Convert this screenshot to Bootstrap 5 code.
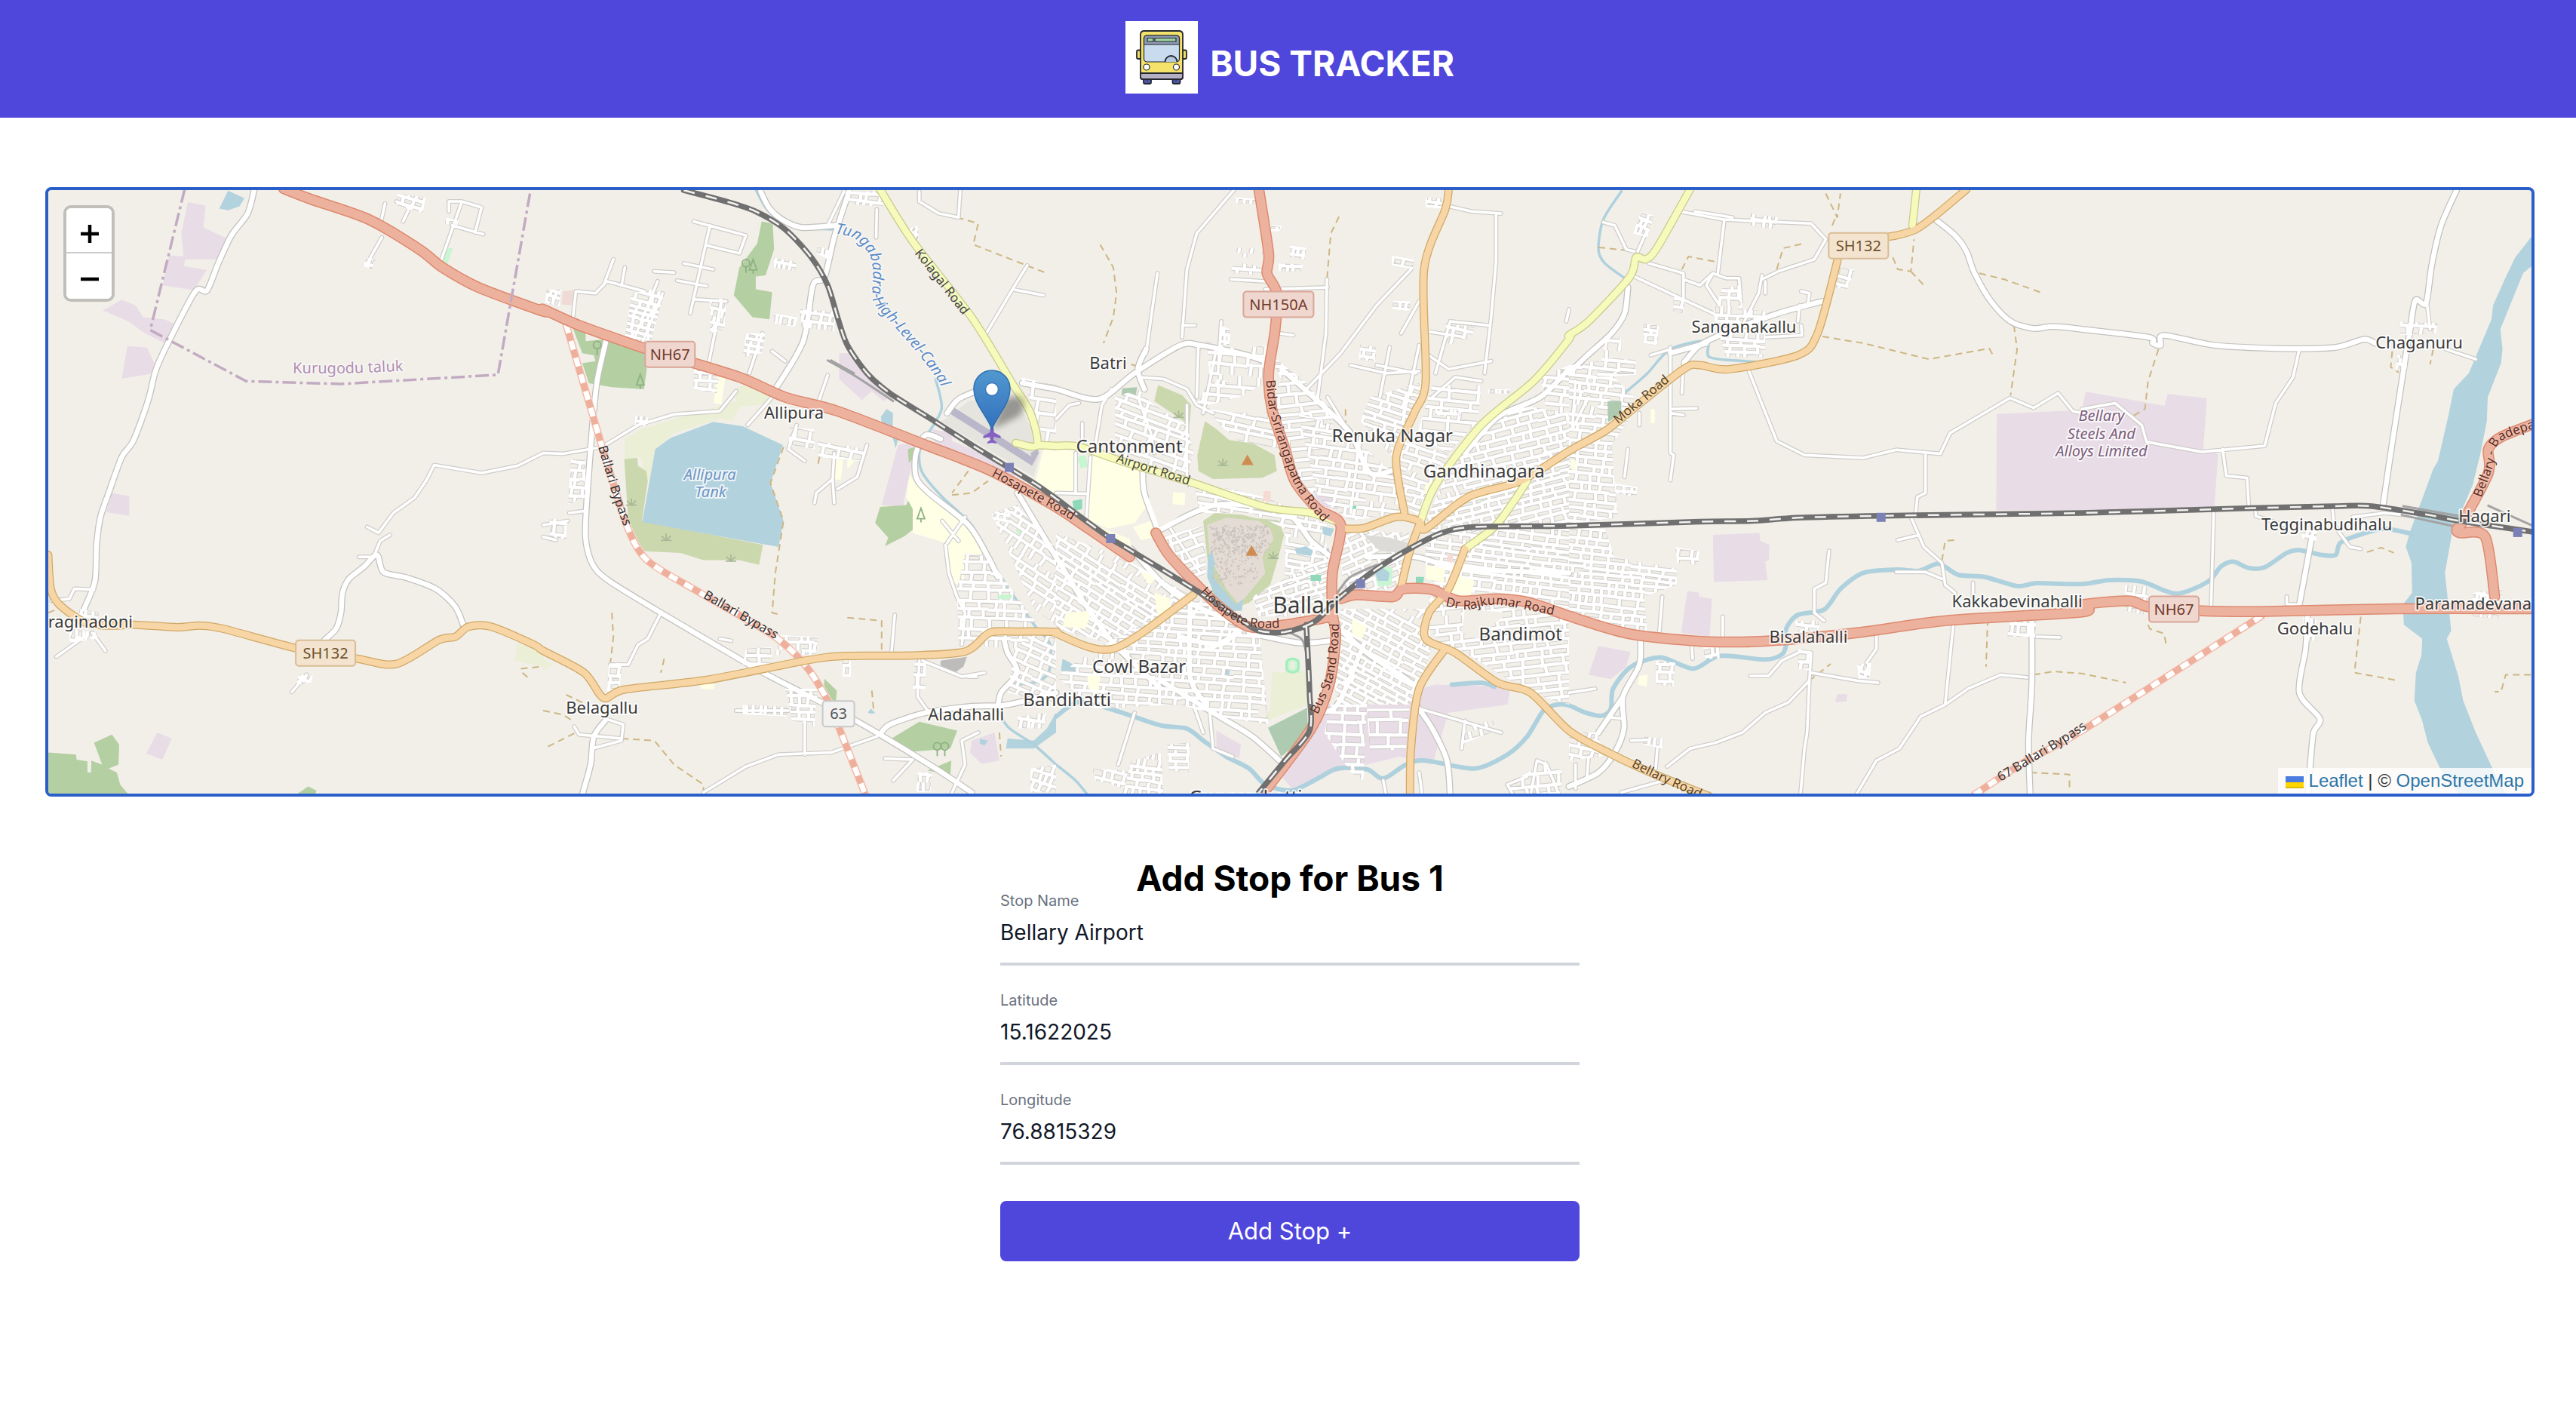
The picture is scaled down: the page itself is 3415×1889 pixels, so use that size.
<!DOCTYPE html>
<html lang="en">
<head>
<meta charset="utf-8">
<meta name="viewport" content="width=device-width, initial-scale=1">
<title>Bus Tracker</title>
<link href="https://cdn.jsdelivr.net/npm/bootstrap@5.3.0/dist/css/bootstrap.min.css" rel="stylesheet">
<style>
  :root { --brand: #4f46dc; }
  body { font-family: Inter, "Liberation Sans", sans-serif; background: #fff; color: #000; }
  .site-header { background: var(--brand); padding: 28px 0 32px 5px; gap: 16px; }
  .site-logo { width: 96px; height: 96px; }
  .site-title { font-size: 46px; line-height: 64px; font-weight: 700; padding-top: 16px; }
  .page-body { padding: 92px 55px 0 60px; }
  .map-frame { border: 4px solid #2a5fc9; border-radius: 8px; height: 808px; background: #f2efe9; }
  .map-canvas { width: 100%; height: 100%; }
  .zoom-control { top: 20px; left: 20px; border: 4px solid rgba(0,0,0,.2); border-radius: 10px; background-clip: padding-box; }
  .zoom-control button { width: 60px; height: 60px; border: 0; background: #fff; padding: 0; border-radius: 0 0 6px 6px; }
  .zoom-control button:first-child { border-bottom: 2px solid #ccc; border-radius: 6px 6px 0 0; }
  .map-credit { right: 0; bottom: 0; padding: 0 10px; font: 24px/34px "Liberation Sans", sans-serif; color: #333; background: rgba(255,255,255,.8); }
  .map-credit a { color: #2e76a8; text-decoration: none; }
  .map-credit svg { width: 24px; height: 16px; }
  .stop-form { width: 768px; margin-top: 92px; }
  .stop-title { font-size: 46px; line-height: 32px; font-weight: 700; margin: 0; }
  .stop-field { margin-bottom: 32px; }
  .stop-field label { font-size: 20px; line-height: 28px; color: #6b7280; display: block; }
  .stop-field input { font-size: 28px; line-height: 40px; padding: 8px 0 20px; border: 0; border-bottom: 4px solid #d1d5db; border-radius: 0; color: #111827; background: transparent; height: 72px; }
  .stop-button { background: var(--brand); color: #fff; border-radius: 8px; height: 80px; font-size: 31px; margin-top: 16px; border: 0; }
  .place { font-family: "Noto Sans", sans-serif; fill: #3c3c3c; stroke: #fff; stroke-opacity: .75; stroke-width: 4px; paint-order: stroke; stroke-linejoin: round; text-anchor: middle; }
</style>
<script src="https://cdn.jsdelivr.net/npm/bootstrap@5.3.0/dist/js/bootstrap.bundle.min.js"></script>
</head>
<body>
<header class="site-header d-flex justify-content-center align-items-center">
  <svg class="site-logo" viewBox="0 0 96 96" aria-hidden="true">
    <rect width="96" height="96" fill="#fff"/>
    <g stroke="#25272f" stroke-width="1.8" stroke-linejoin="round">
      <rect x="15" y="38.500" width="6" height="11.500" rx="2" fill="#f0dc62"/>
      <rect x="75" y="38.500" width="6" height="11.500" rx="2" fill="#f0dc62"/>
      <rect x="24" y="75" width="10" height="8" rx="2" fill="#4c58a8"/>
      <rect x="62.500" y="75" width="10" height="8" rx="2" fill="#4c58a8"/>
      <path d="M20 74V18q0-5 5-5h46q5 0 5 5v56q0 3-3 3H23q-3 0-3-3z" fill="#f4e26b"/>
      <path d="M20 69h56v5q0 3-3 3H23q-3 0-3-3z" fill="#b4afc2"/>
      <rect x="24.500" y="19" width="47" height="35" rx="4" fill="#c9dcef" stroke-width="1.200"/>
      <path d="M24.500 31v-8q0-4 4-4h39q4 0 4 4v8z" fill="#8e9bb1" stroke-width="1.200"/>
      <rect x="29" y="22.500" width="8" height="4.500" fill="#9fd2a0" stroke-width="1.200"/>
      <rect x="39" y="22.500" width="28" height="4.500" fill="#9fd2a0" stroke-width="1.200"/>
      <path d="M52.500 54a8 8 0 0 1 16 0" fill="#b4c8e0"/>
      <circle cx="28" cy="61" r="4" fill="#fff" stroke-width="1.200"/>
      <circle cx="67.500" cy="61" r="4" fill="#fff" stroke-width="1.200"/>
      <path d="M29 77v3M67 77v3" stroke-width="1"/>
    </g>
  </svg>
  <h1 class="site-title text-white mb-0">BUS TRACKER</h1>
</header>

<main class="page-body">
  <section class="map-frame position-relative overflow-hidden" aria-label="Map">
    <svg class="map-canvas d-block" id="map" viewBox="64 252 3292 800" preserveAspectRatio="xMidYMid slice" fill="none"></svg>
    <div class="zoom-control position-absolute d-flex flex-column">
      <button type="button" aria-label="Zoom in"><svg width="60" height="56" viewBox="0 0 60 56"><path d="M19 33h24M31 21v24" stroke="#000" stroke-width="4.500"/></svg></button>
      <button type="button" aria-label="Zoom out"><svg width="60" height="60" viewBox="0 0 60 60"><path d="M19 34h24" stroke="#000" stroke-width="4.500"/></svg></button>
    </div>
    <div class="map-credit position-absolute">
      <a href="#"><svg viewBox="0 0 12 8" aria-hidden="true"><path fill="#4c7be1" d="M0 0h12v4H0z"/><path fill="#ffd500" d="M0 4h12v3H0z"/><path fill="#e0bc00" d="M0 7h12v1H0z"/></svg> Leaflet</a> | © <a href="#">OpenStreetMap</a>
    </div>
  </section>

  <form class="stop-form mx-auto">
    <h2 class="stop-title text-center">Add Stop for Bus 1</h2>
    <div class="stop-field"><label for="stopName">Stop Name</label><input class="w-100 d-block" id="stopName" type="text" value="Bellary Airport"></div>
    <div class="stop-field"><label for="lat">Latitude</label><input class="w-100 d-block" id="lat" type="text" value="15.1622025"></div>
    <div class="stop-field"><label for="lng">Longitude</label><input class="w-100 d-block" id="lng" type="text" value="76.8815329"></div>
    <button type="button" class="stop-button btn w-100">Add Stop +</button>
  </form>
</main>

<script>
// The map is split in five sheets; every sheet has its own origin and grid scale.
const SHEETS = { A: [40, 2.306], B: [720, 2.306], C: [1400, 2.306], D: [2080, 2.306], E: [2760, 2.394] };
const pt = (s, x, y) => [SHEETS[s][0] + x / SHEETS[s][1], 230 + y / 1.889];
const parse = str => {
  let s = 'A', out = [], n = [];
  for (const t of str.trim().split(/\s+/)) {
    if (SHEETS[t]) { s = t; continue; }
    n.push(+t);
    if (n.length < 2) continue;
    const q = pt(s, n[0], n[1]), last = out[out.length - 1];
    n = [];
    // sheets share their edge, so a line that crosses it lists the edge point twice
    if (!last || Math.hypot(q[0] - last[0], q[1] - last[1]) > 2) out.push(q);
  }
  return out;
};
const r1 = v => Math.round(v * 10) / 10;
const straight = p => 'M' + p.map(q => r1(q[0]) + ' ' + r1(q[1])).join('L');
const curve = p => {
  if (p.length < 3) return straight(p);
  let d = 'M' + r1(p[0][0]) + ' ' + r1(p[0][1]);
  for (let i = 0; i < p.length - 1; i++) {
    const a = p[i - 1] || p[i], b = p[i], c = p[i + 1], e = p[i + 2] || c;
    d += 'C' + [b[0] + (c[0] - a[0]) / 7, b[1] + (c[1] - a[1]) / 7, c[0] - (e[0] - b[0]) / 7, c[1] - (e[1] - b[1]) / 7, c[0], c[1]].map(r1).join(' ');
  }
  return d;
};
let seed = 11;
const rnd = () => (seed = (seed * 16807) % 2147483647) / 2147483647;

const AREAS = [
  ['#e8dce6', ['A 482 72 536 80 530 135 600 162 570 215 470 215 462 150','A 425 205 475 208 470 232 540 242 500 292 405 280','A 222 343 280 316 322 330 345 360 410 365 450 380 430 432 350 400 300 370','A 297 432 357 436 382 480 380 500 280 514','A 250 800 303 808 303 857 232 848','A 388 1400 433 1415 404 1468 355 1452',
    'B 905 450 945 450 990 500 1060 560 1040 570 1005 545 975 567 905 515','B 1085 680 1130 675 1135 700 1110 790 1100 835 1035 830','B 1190 640 1250 650 1250 670 1400 720 1460 745 1440 760 1200 690','B 1310 1420 1380 1400 1395 1470 1340 1478 1305 1450',
    'C 790 797 860 820 862 842 800 830','C 490 1395 565 1430 560 1465 490 1440','C 800 1330 1080 1330 1110 1290 1160 1280 1390 1285 1380 1330 1200 1350 1150 1480 1050 1460 850 1500 720 1540 680 1500','C 860 1040 960 980 975 1010 930 1045','C 1490 700 1550 690 1540 715 1490 730',
    'D 440 905 582 900 585 920 613 930 611 968 600 972 607 1018 443 1023','D 362 1045 397 1050 397 1060 437 1065 430 1160 343 1150','D 90 1183 188 1198 175 1235 128 1266 60 1255','D 820 1304 851 1304 848 1322 814 1324','D 1308 602 1568 592 E 0 590 12 546 262 582 272 552 397 563 385 690 432 703 420 840 0 843 D 1568 845 1306 843']],
  ['#b4cfa2', ['A 55 1450 140 1455 142 1468 175 1472 175 1500 186 1500 187 1470 220 1480 195 1425 250 1405 272 1430 270 1480 240 1490 265 1500 275 1530 305 1560 55 1560','A 805 1560 850 1535 875 1545 870 1560',
    'B 668 120 702 125 706 190 680 255 650 258 650 290 700 297 692 365 640 360 583 305 600 235 655 175','B 90 385 130 400 130 420 190 415 308 445 317 490 308 540 210 535 140 525 120 475 160 470 155 455 120 450','B 1030 835 1110 830 1120 812 1200 832 1195 845 1175 850 1175 882 1140 885 1105 908 1045 933 1055 912 1015 875','B 1115 690 1140 685 1135 710 1118 725','B 860 1265 898 1295 895 1325 858 1300','B 1065 1415 1150 1373 1266 1395 1245 1440 1130 1448','B 1175 1495 1248 1470 1245 1505']],
  ['#aecab0', ['C 203 538 248 535 243 558 200 556','C 648 1388 768 1338 770 1405 688 1460','D 118 570 160 570 160 600 120 622']],
  ['#ebefd5', ['B 250 665 300 640 590 570 590 540 610 530 710 550 700 575 600 585 580 620 540 615 400 650 345 690 330 770 310 760 300 710 250 715','A 1490 1175 1568 1200 1568 1235 1480 1220','C 660 1250 765 1245 770 1330 660 1365 620 1385 655 1340','B 0 1215 30 1230 0 1245']],
  ['#cbd8ae', ['B 248 715 288 712 290 732 315 745 320 770 302 870 672 930 660 980 600 968 490 968 420 950 290 945 262 890','C 312 530 385 555 413 580 408 630 300 570','C 455 620 490 640 530 668 600 675 668 705 675 745 630 762 480 765 435 745 432 705','C 450 870 485 850 570 855 610 863 680 868 697 905 680 960 655 1030 590 1075 540 1090 480 1060 462 960']],
  ['#e4dcd4', ['C 462 880 520 862 620 870 655 890 665 915 630 960 640 1000 610 1030 560 1080 520 1040 470 960']],
  ['#b2d2dd', ['A 605 43 655 62 640 82 605 92 578 88','B 343 690 390 662 520 622 610 633 733 680 695 775 735 870 720 935 303 873','B 1032 610 1050 590 1070 600 1068 640 1040 640','B 1068 660 1085 665 1078 688','B 1335 1416 1360 1420 1350 1432 1335 1428','B 1420 1415 1500 1420 1540 1390 1568 1350 1568 1400 1500 1440 1415 1440','B 992 1350 1002 1340 1015 1350 1005 1353',
    'C 465 955 478 948 485 975 480 1010 520 1050 550 1080 572 1065 568 1095 540 1095 490 1065 462 1010','C 730 940 765 933 785 945 780 958 735 952','C 815 885 850 890 840 908 815 903','C 820 935 835 940 832 975 812 965','C 905 975 912 958 922 975','C 510 1235 532 1238 528 1258 508 1252','C 20 1215 65 1235 55 1255 15 1245',
    'E 1430 155 1375 210 1345 260 1305 330 1300 365 1228 500 1180 540 1165 600 1130 720 1115 740 1040 900 1028 935 1046 975 1048 1050 1018 1080 1022 1130 1080 1165 1078 1205 1060 1250 1055 1320 1080 1370 1098 1425 1140 1495 1200 1560 1350 1560 1300 1485 1250 1400 1210 1320 1195 1260 1158 1165 1172 1145 1152 1000 1175 900 1240 780 1265 700 1285 620 1288 560 1330 475 1335 440 1328 390 1400 250 1430 230']],
  ['#ffffe5', ['B 530 510 557 512 545 578 522 575','B 893 705 918 710 910 768 890 765','B 930 708 960 715 930 740','B 1120 755 1145 780 1200 820 1300 880 1345 950 1290 960 1285 1033 1255 1025 1230 925 1130 900 1130 840 1110 810','B 480 1275 525 1280 520 1292 482 1290','B 1530 690 1568 695 1568 810 1505 770',
    'C 0 690 60 695 60 800 0 805','C 100 705 160 705 265 745 280 830 240 875 160 890 92 865']],
  ['#e5e4de', ['B 1240 610 1300 570 1370 560 1450 570 1500 650 1520 700 1500 760 1420 720 1215 620']],
  ['#b9b7c9', ['B 1255 585 1505 715 1495 732 1245 602','B 1490 700 1512 690 1515 700 1500 725']],
  ['#bdbcbb', ['B 1215 1220 1296 1210 1285 1235 1250 1255 1215 1240']],
  ['#f0dad5', ['B 60 295 93 292 88 330 56 328']],
  ['#c8f5d2', ['C 65 710 90 705 98 735 75 738','B 1445 890 1465 885 1465 898 1450 905','A 1275 185 1292 188 1275 228 1260 222']]
];

// parks, grounds and ponds inside the built-up districts
const INSETS = [
  ['#f2efe9', ['C 300 745 400 780 390 850 320 890 280 830','C 1250 1090 1380 1100 1290 1165 1240 1150']],
  ['#ffffe5', ['C 235 885 290 870 300 910 260 918','C 358 798 395 800 393 830 356 828','C 120 880 225 915 230 935 180 925','C 255 995 310 1010 285 1030','C 300 1050 350 1065 345 1100 310 1105','C 30 1100 110 1095 90 1140 20 1135','C 1130 980 1190 990 1185 1025 1130 1015','C 1210 1000 1280 1020 1265 1062 1200 1050','C 905 1115 950 1135 935 1165 905 1155','C 95 1255 135 1260 130 1295 100 1290','C 1130 775 1150 772 1145 795 1125 798','D 215 1258 240 1255 238 1285 210 1280','D 250 590 262 590 262 625 250 625','D 5 715 25 720 20 745 5 740']],
  ['#dcdbd8', ['C 940 905 1020 912 1075 925 1070 950 990 945']],
  ['#c8f5d2', ['C 702 1215 745 1215 745 1250 702 1250','C 970 990 1000 980 1030 990 1025 1030 985 1035','B 1390 1055 1435 1055 1430 1066 1392 1066']],
  ['#b2d2dd', ['C 975 1000 1000 988 1020 1000 1015 1020 985 1020','C 730 940 765 933 785 945 780 958 735 952','C 815 885 850 890 840 908 815 903']],
  ['#8fd9ba', ['C 50 820 80 815 80 840 55 845','C 778 1005 810 1005 810 1020 778 1020','C 1100 1010 1125 1010 1122 1030 1100 1030','C 898 832 918 832 918 840 898 840']],
  ['#f5dbd3', ['C 635 795 656 795 656 822 632 820','C 1197 950 1215 955 1210 975 1195 972']],
  ['#aecab0', ['D 118 570 160 570 160 600 120 622']]
];

// district outline, street angle, block size
const TOWNS = [
  ['C 180 560 250 540 300 580 400 630 420 700 400 760 300 740 180 700', 20, 13, 30],
  ['C 460 420 560 440 645 430 650 520 560 560 420 590 470 520', 5, 15, 26],
  ['C 470 590 560 600 650 600 690 690 560 670 500 630', 12, 12, 30],
  ['C 700 500 760 520 850 600 830 700 790 800 760 800 720 690 660 560', -6, 14, 34],
  ['C 740 600 880 640 1030 750 1060 850 900 870 800 810', 8, 13, 26],
  ['C 930 620 960 560 1130 520 1110 600 1060 670 1200 700 1120 860 1050 830 1040 720', 18, 10, 24],
  ['C 1150 530 1300 530 1290 620 1200 700 1100 660', 6, 14, 30],
  ['C 1320 640 1420 580 1568 600 1568 880 1350 880 1280 900 1130 870 1200 740', -14, 10, 22],
  ['C 1130 880 1568 890 1568 1090 1360 1050 1180 1050 1130 1000', 7, 10, 22],
  ['C 1140 1060 1568 1110 1568 1330 1450 1300 1250 1200 1180 1180 1140 1140', -6, 12, 26],
  ['C 870 1090 1130 1090 1150 1180 1110 1290 1080 1330 860 1330 840 1200', 28, 10, 22],
  ['C 860 890 1080 900 1060 1040 880 1050', -24, 12, 22],
  ['C 420 770 640 810 830 880 820 1060 700 1060 700 890 600 850 440 850', 10, 12, 28],
  ['C 600 1060 840 950 830 1050 770 1110 620 1110', -18, 10, 18],
  ['C 330 910 450 880 460 1000 420 1020 370 960', -20, 13, 26],
  ['C 0 900 200 960 420 1060 260 1150 180 1180 0 1140', 32, 10, 22],
  ['C 100 1200 420 1060 620 1140 650 1380 500 1360 380 1330 120 1340 0 1260', 4, 11, 22],
  ['C 840 1330 950 1330 940 1520 900 1500 820 1400', 2, 13, 24],
  ['C 950 1340 1080 1340 1070 1440 960 1450', 0, 16, 26],
  ['B 1370 850 1450 830 1568 940 1568 1130 1500 1090', 34, 12, 20],
  ['B 1290 950 1360 960 1450 1060 1520 1140 1460 1190 1270 1180 1265 1040', 2, 13, 22],
  ['B 1500 1150 1568 1150 1568 1330 1420 1300 1440 1190', 24, 12, 22],
  ['C 230 1470 320 1450 330 1560 200 1560', 8, 11, 16],
  ['C 340 1430 410 1425 405 1500 345 1495', 2, 10, 20],
  ['D 0 480 90 470 200 560 180 620 130 680 150 860 0 880', 6, 11, 22],
  ['D 0 890 110 890 140 960 330 990 330 1030 230 1060 240 1150 120 1150 0 1100', 6, 11, 20],
  ['D 115 410 160 410 160 465 205 465 205 505 85 510', 4, 12, 20],
  ['D 470 285 525 280 530 340 600 345 600 460 480 460 440 350', 3, 11, 18],
  ['D 325 935 400 945 395 980 330 975', 4, 12, 16],['D 140 775 210 785 205 810 140 800', 6, 13, 14],
  ['D 195 150 220 95 260 105 240 160', 20, 10, 14],['D 555 100 640 110 630 140 555 130', 6, 14, 12],
  ['D 265 1220 325 1225 320 1285 265 1280', 2, 12, 14],['D 0 1400 90 1400 100 1460 0 1470', 12, 12, 16],
  ['D 820 235 875 240 850 290 815 285', 16, 12, 14],['D 228 375 275 380 270 430 228 425', 5, 9, 12],['D 320 310 355 310 350 350 318 345', 8, 10, 14],
  ['D 230 1410 290 1415 285 1440 225 1430', 8, 12, 10],['D 410 1185 460 1180 460 1215 415 1215', -10, 10, 12],['D 690 1120 770 1120 760 1150 700 1150', 4, 10, 14],['D 880 1230 925 1225 920 1265 885 1265', 20, 8, 8],['D 700 1190 740 1195 740 1245 700 1240', 4, 12, 14],['D 1350 1110 1430 1110 1425 1160 1340 1160', 4, 12, 16],
  ['B 270 300 330 290 370 300 330 420 250 410', 14, 10, 18],['B 510 320 560 310 555 390 510 400', 14, 11, 16],['B 460 480 540 500 530 550 460 540', 4, 12, 16],['B 620 400 680 400 670 450 610 460', 10, 11, 16],['B 785 340 895 345 890 395 790 385', 8, 11, 14],['B 705 210 775 220 770 245 705 235', 12, 14, 10],['B 840 180 880 195 870 215 835 200', 14, 11, 12],['B 705 350 780 360 770 385 705 375', 12, 14, 10],['B 925 45 1040 45 1040 85 925 75', 6, 12, 18],['B 1110 140 1145 130 1150 175 1130 180', 20, 9, 12],
  ['B 85 715 130 715 130 810 75 830', 4, 10, 16],['B 20 865 75 865 70 915 20 910', 8, 14, 18],['B 620 1190 700 1185 700 1240 610 1230', 2, 12, 16],['B 720 1155 840 1160 835 1205 710 1205', 2, 12, 16],['B 740 1290 840 1290 830 1385 760 1370', 2, 12, 16],['B 610 1330 745 1335 745 1360 610 1355', 3, 20, 12],['B 200 1230 240 1225 235 1300 195 1300', 2, 12, 12],['B 755 635 830 640 830 690 750 680', 10, 14, 18],['B 840 670 990 690 970 720 840 710', 10, 14, 20],['B 10 290 55 290 50 335 5 325', 20, 9, 9],['B 280 605 320 610 320 632 280 630', 5, 11, 12],['B 1450 1360 1540 1350 1530 1390 1450 1390', 8, 12, 14],['B 1490 1490 1568 1480 1568 1550 1490 1550', 20, 11, 12],['B 1145 1500 1190 1500 1185 1550 1140 1550', 5, 12, 12],['B 1135 1220 1170 1220 1170 1290 1130 1290', 3, 14, 24],['B 1460 510 1568 530 1568 690 1540 690 1500 590', 8, 20, 34],['B 915 1220 942 1220 942 1260 915 1260', 2, 12, 10],['B 1370 850 1430 850 1425 875 1375 868', 14, 12, 10],
  ['A 1120 50 1210 60 1200 100 1120 80', 14, 10, 13],['A 1030 210 1055 215 1045 240 1015 232', 20, 9, 8],['A 1270 110 1310 118 1305 130 1268 126', 8, 10, 10],['A 120 1140 205 1150 205 1165 120 1175', 8, 8, 8],['A 820 1255 865 1258 860 1275 815 1280', 30, 8, 8],['A 150 1090 215 1100 205 1115 150 1110', 8, 8, 10],
  ['C 545 185 635 188 630 212 540 208', 4, 9, 24],['C 540 220 640 235 630 255 535 250', 4, 9, 24],['C 545 60 612 62 612 76 550 74', 3, 9, 16],['C 650 130 690 130 685 145 650 145', 4, 10, 12],['C 715 180 765 185 760 215 715 210', 6, 11, 12],['C 680 225 755 228 750 245 680 245', 4, 10, 12],['C 1130 60 1180 62 1178 88 1130 85', 8, 9, 12],['C 1025 205 1095 215 1090 240 1025 230', 12, 10, 14],['C 1030 318 1085 320 1080 345 1028 340', 6, 11, 12],['C 930 428 980 435 975 472 925 465', 10, 9, 12],['C 490 515 530 520 525 535 485 530', 10, 10, 10],['C 1190 375 1280 385 1270 410 1200 430', 14, 14, 18],['C 1160 590 1235 590 1235 608 1160 605', 2, 12, 12],['C 1320 540 1390 540 1385 552 1320 550', 2, 12, 12],['C 1480 510 1568 480 1568 600 1500 600', 6, 13, 30],['C 110 1490 220 1495 210 1540 120 1520', 14, 12, 14],['C 1250 1380 1340 1370 1330 1400 1240 1430', -14, 13, 20],['C 1380 1530 1500 1470 1550 1500 1540 1555 1400 1555', -6, 15, 22],['C 500 380 535 390 530 430 500 430', 8, 10, 12],['C 650 450 760 520 690 520', 4, 12, 20],
  ['E 1010 370 1130 375 1125 400 1010 405', 4, 12, 16],['E 135 1030 215 1035 200 1105 140 1095', 8, 20, 20],['E 690 890 745 895 745 920 700 915', 14, 10, 10],['E 1240 1050 1335 1040 1325 1115 1240 1110', 10, 12, 12],['E 700 1110 745 1115 740 1170 705 1170', 5, 14, 14],['E 1000 455 1035 455 1030 490 995 490', 8, 10, 14]
];

const LINES = {
  stream: ['B 650 40 680 85 720 115 780 135 890 140','B 1200 515 1218 590 1170 660 1150 700 1160 750 1220 810 1310 880 1370 970 1440 1060 1510 1140','B 1510 1140 1550 1180 1545 1250 1500 1275 1420 1285 1390 1330 1420 1385 1500 1430 1568 1480','C 0 1480 60 1520 100 1560','C 60 560 120 565 160 550','D 160 45 105 115 90 190 110 225 170 262','D 170 550 240 500 310 440 420 420 430 460 540 470 640 475'],
  river: ['C 0 1360 60 1325 120 1330 220 1355 320 1382 400 1390 450 1420 520 1460 590 1490 640 1530 720 1545 800 1515 860 1490 950 1492 1000 1515 1070 1480 1130 1470 1280 1490 1380 1455 1440 1410 1490 1345 1530 1330 1568 1332 D 0 1332 50 1350 100 1358 128 1340 135 1290 190 1235 280 1212 380 1240 460 1208 600 1217 650 1205 664 1180 664 1140 700 1105 780 1092 830 1040 900 1000 1000 992 1070 995 1130 977 1190 1005 1270 1010 1370 1033 1430 1026 1568 1028 E 0 1026 90 1018 190 1022 300 1052 400 1022 440 985 480 972 530 988 580 986 650 950 690 943 760 955 805 955 820 925 880 905 960 890 1045 902','C 1210 1280 1300 1275 1340 1285'],
  track: ['A 1568 700 1490 732 1380 750 1235 730 1210 770 1175 812 1110 850 1065 900 1030 885','A 1050 960 1070 920 1100 905','A 1050 960 1005 960','A 1085 75 1070 130','A 1075 160 1030 225','A 1120 70 1160 85 1140 120','A 1255 220 1320 70 1280 70 1280 95','A 1320 70 1380 85 1360 148','A 1290 130 1385 152','A 65 1070 120 1065 135 1040 195 1042','A 165 1160 80 1210','A 190 1150 230 1195','A 845 1255 800 1298',
    'B 0 700 60 702 180 685 290 630 400 603 540 595 590 545','B 90 370 100 295 160 300 195 270 310 295','B 215 215 185 280','B 250 235 240 280','B 340 245 400 248','B 460 120 620 155 600 200 500 180','B 510 130 450 350','B 430 225 520 240','B 410 268 500 282','B 460 315 560 320','B 350 270 275 420','B 365 300 300 430','B 545 320 505 480','B 670 400 630 500','B 700 445 740 470','B 625 630 700 560','B 870 505 830 600','B 775 630 750 690 800 720','B 890 700 885 765 835 800 830 825','B 885 765 890 825','B 990 680 960 760 900 790','B 1480 230 1435 290 1355 400','B 1435 290 1530 305','B 920 45 870 130','B 1150 45 1150 70 1210 100 1270 110 1275 45','B 1020 90 1018 160','B 0 880 75 870','B 0 910 40 918','B 80 850 130 845','B 360 1100 320 1165 290 1180 260 1230 205 1230','B 490 1550 620 1485 720 1455 880 1450 1020 1410','B 800 1380 800 1455','B 590 1345 750 1345','B 95 1385 110 1405 240 1415 245 1380 190 1365','B 150 1440 240 1420','B 1075 1105 1065 1200','B 1045 1465 1130 1468 1070 1520','B 540 1165 575 1170','B 1150 1220 1145 1310 1180 1350','B 1160 1220 1280 1260 1350 1250','B 1300 1260 1325 1260','B 1230 930 1240 1000 1265 1060 1290 1100 1280 1180','B 1235 925 1290 860','B 1270 920 1220 870','B 1250 1550 1290 1480 1280 1420 1330 1400',
    'C 545 40 430 150 400 240 385 410','C 310 250 275 450','C 385 380 425 380','C 505 370 495 500','C 435 435 430 560','C 490 440 450 600','C 640 290 830 285','C 828 265 825 400 800 560','C 535 265 640 270','C 680 400 725 405','C 1085 240 980 330 870 450 760 545','C 1110 320 1055 400','C 1020 435 990 560','C 1110 430 1060 620','C 1190 80 1270 95 1360 100','C 1345 105 1345 220 1330 360 1310 500','C 1205 370 1320 380','C 1205 370 1160 500','C 1130 395 1250 410','C 1150 560 1220 510 1300 520','C 170 540 140 580 120 680','C 0 615 40 580 70 575','C 255 510 330 515 400 540 430 580 480 600','C 80 625 80 680','C 250 560 290 650 300 700','C 540 1460 480 1440 470 1350','C 420 1330 450 1400','C 240 1350 190 1480','C 1560 370 1568 340','C 830 560 890 640','C 400 580 400 780','C 930 660 900 850','C 980 480 1100 500','C 1490 700 1540 690','C 1000 1520 1010 1560','C 1110 1500 1120 1560','C 1450 1560 1470 1470 1500 1480 1540 1560','C 1400 1560 1380 1530 1440 1510','C 1110 1340 1360 1400','C 1250 1370 1240 1440','C 900 480 1010 500 1110 495','C 1130 450 1200 490 1330 470','C 60 700 60 800','C 105 710 92 870','C 0 800 90 802','C 350 890 440 1000',
    'D 340 95 470 115 640 122 740 125 785 165 750 215 640 245 590 265','D 385 95 500 110','D 475 115 455 250','D 105 122 140 130 175 190 200 195','D 210 195 240 140','D 245 225 350 250 350 310','D 200 258 270 285 440 350','D 350 265 400 280 440 250 480 262 520 262 525 320','D 440 250 420 280 460 330','D 590 255 580 300 530 380','D 600 270 600 300','D 705 330 700 370','D 710 380 712 405 600 410','D 710 295 735 300 730 330','D 550 495 635 670 720 705 900 712 1000 692 1135 702 1165 650 1348 562 1420 587 1495 550 1540 595 1568 600 E 0 590 105 575 190 630 205 672 380 697 580 682 615 575 670 510 690 440','D 1090 705 1090 800 1065 810 1060 850 1045 860 1085 935 1140 975 1150 1030 1180 1050','D 1005 918 1070 905','D 1000 998 1090 998 1140 1015','D 310 435 310 700 320 705 310 768','D 250 455 310 440','D 310 590 390 588','D 310 600 350 605','D 350 470 345 550','D 795 945 785 1025 750 1040 750 1100 780 1120','D 555 1258 610 1258 650 1220 700 1200','D 740 1200 735 1270 728 1400 720 1440 708 1552','D 735 1270 670 1325 600 1350 530 1400 450 1425 370 1440 300 1485','D 740 1250 880 1270 945 1275','D 910 1225 940 1190 940 1155','D 1175 1130 1150 1330','D 875 1560 940 1470 1010 1440 1075 1360 1150 1330 1220 1290 1320 1255 1400 1262','D 1235 1025 1235 1060','D 375 1180 378 1215','D 470 1110 470 1160','D 285 1060 275 1160','D 215 600 215 630','D 20 1480 20 1540','D 60 1460 55 1510','D 190 1420 240 1418','D 270 1440 265 1490','D 160 1550 290 1520','D 0 1300 80 1290','D 120 1362 165 1365','D 1430 1160 1500 1162','D 20 520 10 640 60 560','D 180 690 170 760',
    'E 447 690 458 757 524 762 530 835 550 838 552 858 640 880','E 418 850 410 1085','E 795 840 800 880 850 935 885 940','E 650 1060 650 1078 690 1080','E 1155 440 1250 465','E 1095 325 1105 390','E 860 860 960 850 1060 858'],
  minor: ['A 685 40 665 100 615 155 575 225 540 293 505 295 430 410 385 490 360 570 315 670 280 710 240 800 215 860 203 930 198 1020 165 1090','A 900 1168 935 1140 950 1100 955 1050 975 1015 1020 985 1060 955 1080 998 1150 1012 1240 1040 1300 1085 1325 1133',
    'B 192 420 165 520 150 640 130 870 135 940 160 990 210 1025 360 1100 630 1230 720 1270 900 1345 1030 1405 1200 1490 1310 1550','B 190 1370 155 1410 145 1480 120 1555','B 935 45 890 160 860 260 825 280 795 420 710 540','B 665 45 690 85 730 115 790 135 895 130','B 1235 600 1270 565 1340 540','B 1465 525 1568 540 C 0 540 130 565 240 500 380 430 440 430 560 450 640 470','B 1030 1405 1060 1380 1170 1350 1300 1335 1420 1330 1568 1300','B 1215 665 1170 655 1140 700 1140 760 1180 800 1300 880 1360 960 1390 1010','B 1450 800 1568 960 C 0 960 90 1080 180 1180 320 1290','B 1390 1340 1400 1300 1450 1250 1420 1200 1410 1170',
    'C 300 900 490 830 700 850 780 920 840 960','C 690 490 800 570 900 650 960 750 1040 740','C 265 740 270 800 310 890','C 270 540 250 490 275 440','C 320 1270 500 1360 600 1410 690 1475','C 840 1120 950 1200 1060 1260 1110 1290','C 230 940 330 1030 420 1080 560 1130','C 470 1190 560 1150','C 590 1150 740 1175 840 1170','C 1100 1330 1150 1390 1195 1470 1205 1560','C 950 960 1100 960 1240 990 1568 1000','C 1568 490 1480 560 1350 610 1250 700','C 380 1160 500 1180 570 1130','C 410 1080 410 1260 460 1330','C 940 1180 860 1330 790 1350',
    'D 180 285 170 350 130 400 50 460 0 500','D 355 470 400 430 490 395 640 350 775 320','D 310 450 420 425','D 1115 112 1180 155 1215 195 1240 250 1290 320 1350 370 1420 388 1480 383 1568 390 E 0 388 210 410 225 425 250 430 260 405 420 430 620 438 800 436 895 415 930 425','D 218 1160 215 1230 165 1310 168 1390 140 1450 90 1500 0 1535','D 1415 1100 1415 1280 1405 1420 1410 1555','D 165 1310 90 1400',
    'E 1190 40 1140 130 1110 230 1092 325 1058 318 1040 400 1025 470 980 700 955 835','E 730 910 690 1080','E 715 1110 710 1190 690 1300 755 1365 735 1400 725 1480 718 1552'],
  sh: ['A 55 955 63 1040 90 1080 170 1125 250 1132 320 1130 450 1136 520 1132 590 1140 820 1190 1000 1215 1120 1228 1250 1168 1300 1160 1340 1135 1410 1135 1540 1180 B 0 1195 125 1250 185 1313 250 1292 500 1268 800 1220 920 1208 1120 1207 1290 1197 1365 1150 1450 1147 1568 1148 C 0 1152 175 1190 420 1055','C 1200 40 1190 90 1125 240 1130 520 1095 600 1040 710 1065 850','C 870 888 940 888 1040 860 1110 870 1130 890 1260 810 1420 770 1568 695 D 0 695 110 645 180 600 350 490 400 480 490 490 700 455 760 400 820 220 830 180 1000 155 1060 140 1120 105 1215 40','C 1110 880 1080 950 1055 1035','C 1250 940 1200 1040 1140 1100 1130 1165 1220 1200 1350 1275 1450 1300 1568 1395 D 0 1395 120 1450 250 1500 430 1560','C 1190 1190 1110 1290 1085 1440 1082 1560'],
  ye: ['B 1030 40 1130 170 1310 360 1430 520 1490 600 1510 680 1445 675','B 1510 680 1568 682 C 0 682 70 684 200 720 400 770 640 835 780 850 870 875','C 1115 870 1160 780 1300 630 1460 520 1568 415 D 0 405 60 370 185 260 205 210 235 215 270 185 370 40','D 1050 130 1062 40','C 1440 770 1400 820 1340 885 1250 940'],
  nh: ['A 775 38 860 65 1035 115 1190 190 1260 235 1370 285 1568 345 B 0 340 110 380 300 435 380 455 600 510 740 560 900 595 1170 680 1370 745 1568 835 C 0 835 100 890 225 960','C 305 900 345 955 430 1030 500 1085 590 1135 700 1130 840 1110','C 620 40 650 200 645 250 675 300 670 390 650 500 660 590 700 690 730 770 800 840 870 880 845 1000 845 1100 855 1160 835 1280 780 1390 640 1545','C 870 1065 920 1055 1030 1060 1060 1040 1150 1042 1230 1070 1350 1065 1450 1075 1568 1108 D 0 1108 180 1152 380 1170 530 1173 700 1165 900 1148 1150 1120 1568 1098 E 0 1080 150 1070 210 1085 380 1095 560 1097 1000 1090 1430 1090','E 1430 628 1330 660 1290 690 1290 750 1210 870 1190 890 1200 900 1280 910 1310 1060'],
  bypass: ['B 70 378 175 670 220 790 260 890 320 970 480 1050 700 1155 800 1230 870 1320 920 1420 985 1555','E 570 1108 0 1395 D 1568 1395 1400 1470 1240 1555'],
  rail: ['B 430 42 560 70 650 95 740 140 820 210 870 280 900 360 930 430 990 500 1060 550 1200 622 1330 690 1500 775 1568 814 C 60 851 165 913 230 945 440 1050 560 1115 620 1145 700 1148 790 1122 870 1060 980 990 1080 940 1180 900 1280 885 1568 882 D 0 882 400 872 560 870 700 862 960 857 1568 850 E 0 849 540 838 800 833 920 833 1100 855 1200 870 1427 897','C 765 1130 775 1300 775 1395 700 1470 620 1550'],
  siding: ['B 870 468 960 510 1070 570','B 880 468 950 500','C 700 1145 750 1165 765 1200','C 860 1050 900 1010 980 980','E 1020 833 1200 858','E 1015 855 1190 885','E 1290 832 1425 880'],
  path: ['B 1265 110 1330 125 1315 178 1540 250','B 735 685 695 775 735 870 710 1000 700 1100 725 1105','B 210 1100 215 1160 205 1230','B 930 1112 1035 1120 1035 1195','B 240 1415 340 1420 400 1480 490 1530 490 1550','B 0 1345 60 1355 90 1370','B 70 1305 120 1325','B 15 1435 100 1400','B 370 1215 360 1250','B 1250 805 1310 800 1360 770','B 1300 745 1250 800','B 1005 1295 1010 1340','A 55 1100 85 1090','A 1500 1240 1560 1235','A 1505 1250 1530 1268','B 1395 1400 1400 1460','B 845 710 840 730',
    'C 135 178 175 235 185 300 175 360 145 425','C 865 108 840 150 828 265','C 230 478 255 485','C 885 590 885 640','D 785 50 820 110 830 50','D 805 130 815 110','D 775 408 900 425 1100 465 1285 438 1300 460','D 1255 250 1330 265 1450 300','D 1360 380 1370 440 1350 555','D 990 210 1005 240 1045 245 1055 165','D 1045 245 1085 280','D 635 240 655 187 720 175','D 345 240 365 208 455 222','D 90 185 170 192','D 1140 970 1150 920 1180 918','D 1280 1115 1275 1235','D 735 1270 800 1228','D 1420 1255 1480 1247 1568 1252 E 0 1250 140 1275','D 1410 1500 1530 1505 1530 1540',
    'E 243 440 210 520 200 590 160 608','E 985 445 980 485 1005 498','E 1115 440 1105 478','E 905 948 950 937 990 950','E 885 1110 865 1250 1005 1270','E 1425 1255 1345 1255 1330 1298 1310 1298','E 210 1130 215 1140 260 1152 268 1180'],
  border: ['A 472 40 367 392 660 520 950 527 1430 504 1530 40']
};

// per class: list of [colour, width, dash]
const PENS = {
  stream: [['#aed1dd', 3.5]], river: [['#aed1dd', 6]],
  path: [['#cdb683', 2, '9 6']],
  track: [['#cfcdca', 6], ['#fff', 3.5]],
  minor: [['#c2c1be', 9], ['#fff', 6.5]],
  bypass: [['#f8dcd2', 11], ['#eeb09c', 9], ['#fff', 7, '12 11']],
  ye: [['#c7ca8c', 11], ['#f6fabb', 8.5]],
  sh: [['#cfa866', 11], ['#f7d5a4', 8.5]],
  nh: [['#dd8a6f', 14.5], ['#edb29e', 11.5]],
  border: [['#c2abc2', 3.5, '18 5 4 5']],
  siding: [['#a3a3a3', 3]],
  rail: [['#707070', 7.5], ['#f4f2ee', 2.5, '15 15']]
};

const BIG = 24, MID = 22;
const PLACES = [
  ['A', 184, 1137, MID, 'raginadoni'], ['B', 767, 613, MID, 'Allipura'], ['B', 180, 1353, MID, 'Belagallu'], ['B', 1293, 1370, MID, 'Aladahalli'],
  ['C', 159, 490, MID, 'Batri'], ['C', 224, 699, BIG, 'Cantonment'], ['C', 1028, 672, BIG, 'Renuka Nagar'], ['C', 1308, 762, BIG, 'Gandhinagara'],
  ['C', 1420, 1169, BIG, 'Bandimot'], ['C', 254, 1250, BIG, 'Cowl Bazar'], ['C', 34, 1334, BIG, 'Bandihatti'], ['C', 765, 1102, 30, 'Ballari'], ['C', 580, 1578, BIG, 'Guggarahatti'],
  ['D', 535, 398, MID, 'Sanganakallu'], ['D', 732, 1174, MID, 'Bisalahalli'], ['D', 1370, 1086, MID, 'Kakkabevinahalli'],
  ['E', 1070, 438, MID, 'Chaganuru'], ['E', 777, 893, MID, 'Tegginabudihalu'], ['E', 1278, 873, MID, 'Hagari'], ['E', 740, 1155, MID, 'Godehalu'], ['E', 1242, 1092, MID, 'Paramadevana']
];
const TINTED = [
  ['B', 510, 766, 20, 'Allipura', '#6d94c4'], ['B', 512, 810, 20, 'Tank', '#6d94c4'],
  ['E', 62, 619, 20, 'Bellary', '#7c5f7e'], ['E', 62, 664, 20, 'Steels And', '#7c5f7e'], ['E', 62, 709, 20, 'Alloys Limited', '#7c5f7e']
];
const SHIELDS = [
  ['A', 903, 1201, 79, 'SH132', '#f4e3cf', '#d8bd95', '#6b512a'], ['D', 885, 181, 79, 'SH132', '#f4e3cf', '#d8bd95', '#6b512a'],
  ['B', 388, 453, 66, 'NH67', '#efd6ce', '#d9a698', '#6f3a2c'], ['C', 680, 328, 93, 'NH150A', '#efd6ce', '#d9a698', '#6f3a2c'],
  ['E', 292, 1091, 66, 'NH67', '#efd6ce', '#d9a698', '#6f3a2c'], ['B', 903, 1353, 42, '63', '#f2f2f1', '#c9c9c9', '#555']
];
// street names that follow a line
const ROADNAMES = [
  ['B 1135 200 1290 362 1330 400', 'Kolagal Road', 17, '#444'], ['B 168 685 210 800 250 890 270 930', 'Ballari Bypass', 17, '#333'], ['B 488 1062 760 1190', 'Ballari Bypass', 17, '#333'],
  ['B 1370 757 1568 845 C 0 845 80 885', 'Hosapete Road', 17, '#5d2f24'], ['C 182 722 440 789', 'Airport Road', 17, '#4c4c33'], ['C 440 1048 490 1088 550 1122 600 1136 660 1138 740 1134', 'Hosapete Road', 17, '#5d2f24'],
  ['C 642 518 652 590 680 670 730 780 810 868 860 900', 'Bidar-Srirangapatna Road', 17, '#5d2f24'], ['C 800 1355 845 1270 862 1180 866 1080', 'Bus Stand Road', 17, '#5d2f24'],
  ['C 1190 1083 1260 1092 1350 1080 1560 1112', 'Dr Rajkumar Road', 17, '#5d2f24'], ['D 150 628 340 498', 'Moka Road', 17, '#5a4320'], ['D 190 1485 290 1525 470 1590', 'Bellary Road', 17, '#5a4320'],
  ['D 1320 1523 1560 1402 E 70 1352', '67 Ballari Bypass', 17, '#333'], ['E 1268 812 1306 730 1312 695 1340 665 1500 622', 'Bellary - Badepalli', 17, '#5d2f24'],
  ['B 893 150 950 162 995 200 1008 240 1010 320 1060 370 1150 455 1215 530 1230 580', 'Tungabadra-High-Level-Canal', 20, '#5c8bc6'],
  ['A 803 500 970 500 1180 493', 'Kurugodu taluk', 20, '#b08fb2']
];

let svg = '<defs>';
TOWNS.forEach((t, i) => svg += `<clipPath id="town${i}"><path d="${straight(parse(t[0]))}Z"/></clipPath>`);
svg += '<linearGradient id="pin" x1="0" y1="0" x2="0" y2="1"><stop offset="0" stop-color="#5198cf"/><stop offset="1" stop-color="#3270bd"/></linearGradient><filter id="soft" x="-50%" y="-50%" width="200%" height="200%"><feGaussianBlur stdDeviation="4"/></filter></defs>';
const fillAreas = sets => sets.forEach(([fill, list]) => list.forEach(a => svg += `<path fill="${fill}" d="${straight(parse(a))}Z"/>`));
fillAreas(AREAS);
// scree dots on the rocky hill
for (let i = 0; i < 420; i++) {
  const [x, y] = pt('C', 475 + rnd() * (i % 2 ? 175 : 140), 880 + rnd() * (i % 2 ? 70 : 150));
  svg += `<path stroke="#c9c1bc" stroke-width="1.500" d="M${r1(x)} ${r1(y)}l${r1(rnd() * 6 - 3)} ${r1(rnd() * 4)}"/>`;
}
const draw = (cls, from, to) => PENS[cls].slice(from, to).forEach(([c, w, dash]) => {
  const f = /track|path|border/.test(cls) ? straight : curve;
  svg += `<path stroke="${c}" stroke-width="${w}" stroke-linejoin="round" ${dash ? `stroke-dasharray="${dash}"` : 'stroke-linecap="round"'} d="${LINES[cls].map(l => f(parse(l))).join('')}"/>`;
});
draw('stream'); draw('river'); draw('path');
draw('minor', 0, 1); draw('track', 0, 1);
TOWNS.forEach(([outline, angle, gap, block], i) => {
  const p = parse(outline), xs = p.map(q => q[0]), ys = p.map(q => q[1]);
  const cx = (Math.min(...xs) + Math.max(...xs)) / 2, cy = (Math.min(...ys) + Math.max(...ys)) / 2;
  const R = Math.hypot(Math.max(...xs) - cx, Math.max(...ys) - cy) + 4;
  let d = '';
  for (let y = -R; y < R;) {
    const next = y + gap * (.7 + rnd() * .5);
    for (let x = -R; x < R;) {
      const run = block * (2 + rnd() * 4);
      if (rnd() < .93) d += `M${r1(x)} ${r1(y)}l${r1(run)} ${r1(rnd() * 4 - 2)}`;
      x += run;
    }
    for (let x = -R + rnd() * block; x < R; x += block * (.4 + rnd() * .9)) d += `M${r1(x)} ${r1(y)}L${r1(x + rnd() * 3 - 1.5)} ${r1(next)}`;
    y = next;
  }
  svg += `<g clip-path="url(#town${i})"><g transform="translate(${r1(cx)} ${r1(cy)}) rotate(${angle})"><path stroke="#d3d1ce" stroke-width="6.500" d="${d}"/><path stroke="#fff" stroke-width="4.200" d="${d}"/></g></g>`;
});
fillAreas(INSETS);
draw('track', 1); draw('minor', 1);
draw('siding'); draw('bypass'); draw('ye', 0, 1); draw('sh', 0, 1); draw('nh', 0, 1);
draw('ye', 1); draw('sh', 1); draw('nh', 1); draw('rail'); draw('border');

// stations, peaks, trees
[['B', 1425, 736], ['C', 167, 914], ['C', 931, 1027], ['D', 954, 861], ['E', 1383, 899]].forEach(([s, x, y]) => { const q = pt(s, x, y); svg += `<rect x="${r1(q[0] - 6)}" y="${r1(q[1] - 6)}" width="12" height="12" fill="#7b80b5"/>`; });
[[585, 717], [598, 944]].forEach(([x, y]) => { const q = pt('C', x, y); svg += `<path fill="#ce8c51" d="M${r1(q[0])} ${r1(q[1] - 7)}l8 14h-16z"/>`; });
[['B', 620, 230], ['B', 642, 232], ['B', 165, 435], ['B', 297, 520], ['B', 1205, 1440], ['B', 1155, 855], ['B', 1228, 1440]].forEach(([s, x, y], i) => { const q = pt(s, x, y); svg += `<g stroke="#8db182" stroke-width="1.800" transform="translate(${r1(q[0])} ${r1(q[1])})">${i % 2 ? '<path d="M0-9l5 14h-10zM0 5v5"/>' : '<circle cy="-3" r="5"/><path d="M0 2v8"/>'}</g>`; });
[['B', 270, 825], ['B', 376, 913], ['B', 574, 965], ['C', 510, 725], ['C', 375, 605], ['C', 664, 958]].forEach(([s, x, y]) => { const q = pt(s, x, y); svg += `<path stroke="#a9b896" stroke-width="1.800" d="M${r1(q[0] - 7)} ${r1(q[1] + 3)}h14M${r1(q[0])} ${r1(q[1] + 3)}v-9m-1 8l-5-5m7 5l5-5"/>`; });
{ const q = pt('C', 723, 1232); svg += `<rect x="${r1(q[0] - 8)}" y="${r1(q[1] - 9)}" width="16" height="18" rx="7" fill="#c8f5d2" stroke="#a5ebbd" stroke-width="3"/><rect x="${r1(q[0] - 3)}" y="${r1(q[1] - 5)}" width="6" height="10" fill="#ebefe0"/>`; }

ROADNAMES.forEach(([line, text, size, fill], i) => {
  const soft = i > 12;
  svg += `<path id="way${i}" d="${curve(parse(line))}"/><text class="place" font-size="${size}" ${i === 13 ? 'font-style="italic"' : ''} style="fill:${fill};text-anchor:start;stroke-opacity:${soft ? .6 : .2};stroke-width:${soft ? 3 : 2}px"><textPath href="#way${i}">${text}</textPath></text>`;
});
PLACES.forEach(([s, x, y, size, text]) => { const q = pt(s, x, y); svg += `<text class="place" font-size="${size}" x="${r1(q[0])}" y="${r1(q[1])}">${text}</text>`; });
TINTED.forEach(([s, x, y, size, text, fill]) => { const q = pt(s, x, y); svg += `<text class="place" font-style="italic" font-size="${size}" style="fill:${fill}" x="${r1(q[0])}" y="${r1(q[1])}">${text}</text>`; });
SHIELDS.forEach(([s, x, y, w, text, bg, edge, ink]) => { const q = pt(s, x, y); svg += `<rect x="${r1(q[0] - w / 2)}" y="${r1(q[1] - 17)}" width="${w}" height="34" rx="4" fill="${bg}" stroke="${edge}" stroke-width="2"/><text class="place" font-size="20" style="fill:${ink};stroke:none" x="${r1(q[0])}" y="${r1(q[1] + 7)}">${text}</text>`; });

// bus stop pin and airport sign below it
svg += `<path fill="#8461c4" d="M1315 565q3 1 2.500 8l9 5v3l-9-2-.5 4 4 3v2l-6-1-6 1v-2l4-3-.5-4-9 2v-3l9-5q-.5-7 2.500-8z"/>
<path filter="url(#soft)" fill="#000" fill-opacity=".34" d="M1316 569L1328 536q12-16 26-10 10 12-4 26z"/>
<path fill="url(#pin)" stroke="#2f6fb0" stroke-width="1.500" d="M1315 569C1308 550 1291 536 1291 515a24 24 0 0 1 48 0C1339 536 1322 550 1315 569z"/>
<circle cx="1315" cy="516" r="8.500" fill="#fff" stroke="#3a78b8" stroke-width="1.500"/>`;
document.getElementById('map').innerHTML = svg;
</script>
</body>
</html>
